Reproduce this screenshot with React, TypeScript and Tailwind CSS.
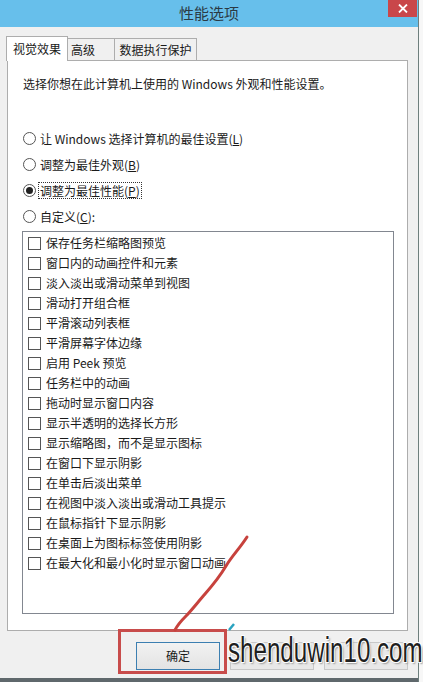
import React from 'react'

const font = { fontFamily: '"Noto Sans CJK SC", "Noto Sans", sans-serif' }

const effects = [
  '保存任务栏缩略图预览',
  '窗口内的动画控件和元素',
  '淡入淡出或滑动菜单到视图',
  '滑动打开组合框',
  '平滑滚动列表框',
  '平滑屏幕字体边缘',
  '启用 Peek 预览',
  '任务栏中的动画',
  '拖动时显示窗口内容',
  '显示半透明的选择长方形',
  '显示缩略图，而不是显示图标',
  '在窗口下显示阴影',
  '在单击后淡出菜单',
  '在视图中淡入淡出或滑动工具提示',
  '在鼠标指针下显示阴影',
  '在桌面上为图标标签使用阴影',
  '在最大化和最小化时显示窗口动画',
]

function Radio({ label, hotkey, checked, colon }: { label: string; hotkey: string; checked?: boolean; colon?: boolean }) {
  return (
    <div className="flex items-center h-[26px]">
      <span className="w-[13px] h-[13px] rounded-full border border-[#555] bg-white flex items-center justify-center">
        {checked && <span className="w-[7px] h-[7px] rounded-full bg-[#222]" />}
      </span>
      <span
        className={
          'ml-[2px] px-[1px] leading-[15px] text-[12px] text-[#1a1a1a] border ' +
          (checked ? 'border-dotted border-[#333]' : 'border-transparent')
        }
      >
        {label}(<span className="underline">{hotkey}</span>){colon ? ':' : ''}
      </span>
    </div>
  )
}

export default function App() {
  return (
    <div className="w-[423px] h-[682px] relative overflow-hidden bg-[#f7f7f7] flex" style={font}>
      <div className="w-[419px] h-full flex flex-col border-r border-[#6e7f7d]">
        {/* title bar */}
        <div className="h-[27px] bg-[#67bfeb] relative flex items-center justify-center">
          <span className="text-[15px] text-[#2b3a44]">性能选项</span>
          <div className="absolute right-[1px] top-0 w-[29px] h-[17px] bg-[#c9474a] flex items-center justify-center">
            <svg width="10" height="9" viewBox="0 0 10 9">
              <path d="M1 0.5 L9 8.5 M9 0.5 L1 8.5" stroke="#fff" strokeWidth="1.8" />
            </svg>
          </div>
        </div>

        {/* body */}
        <div className="flex-1 bg-[#f0f0f0] flex flex-col pl-[7px] pr-[10px] pt-[9px]">
          <div className="flex items-end h-[24px] text-[12px] text-[#1a1a1a]">
            <div className="h-[25px] w-[62px] bg-white border border-b-0 border-[#adadad] flex items-center justify-center relative z-10 -mb-[1px] -ml-[1px]">
              视觉效果
            </div>
            <div className="h-[22px] w-[47px] bg-[#f0f0f0] border border-b-0 border-l-0 border-[#adadad] flex items-center pl-[3px]">
              高级
            </div>
            <div className="h-[22px] w-[82px] bg-[#f0f0f0] border border-b-0 border-l-0 border-[#adadad] flex items-center justify-center">
              数据执行保护
            </div>
          </div>

          <div className="h-[571px] bg-white border border-[#adadad] flex flex-col pl-[14px] pr-[13px] pt-[15px]">
            <p className="text-[12px] leading-[16px] text-[#1a1a1a] ml-[1px]">
              选择你想在此计算机上使用的 Windows 外观和性能设置。
            </p>
            <div className="mt-[33px] flex flex-col ml-[1px]">
              <Radio label="让 Windows 选择计算机的最佳设置" hotkey="L" />
              <Radio label="调整为最佳外观" hotkey="B" />
              <Radio label="调整为最佳性能" hotkey="P" checked />
              <Radio label="自定义" hotkey="C" colon />
            </div>
            <div className="mt-[2px] h-[383px] border border-[#828790] pt-[1px] pl-[5px]">
              {effects.map((e) => (
                <div key={e} className="flex items-center h-[20px]">
                  <span className="w-[13px] h-[13px] border border-[#555] bg-white" />
                  <span className="ml-[5px] text-[12px] text-[#1a1a1a]">{e}</span>
                </div>
              ))}
            </div>
          </div>

          <div className="flex-1 flex items-start pt-[11px] pl-[129px] gap-[10px]">
            <button className="w-[86px] h-[28px] border border-[#3c7fb1] bg-gradient-to-b from-[#f2f2f2] to-[#e3e3e3] text-[12px] text-[#1a1a1a]">
              确定
            </button>
            <div className="w-[86px] h-[28px] border border-[#c8c8c8] bg-[#e8e8e8]" />
            <div className="w-[86px] h-[28px] border border-[#c8c8c8] bg-[#e8e8e8]" />
          </div>
        </div>
        <div className="h-[4px] bg-[#5f686c]" />
      </div>

      {/* annotations */}
      <div className="absolute left-[118px] top-[629px] w-[109px] h-[45px] border-[3px] border-[#c84c4b]" />
      <svg className="absolute left-0 top-0 pointer-events-none" width="423" height="682">
        <path
          d="M247 537 C 240 548, 232 556, 226 566 S 212 586, 205 594 S 190 612, 186 616 S 178 624, 175 630"
          stroke="#c7423d"
          strokeWidth="3"
          fill="none"
          strokeLinecap="round"
        />
        <path d="M229 630 L234 624" stroke="#2aa3c0" strokeWidth="2.5" />
      </svg>
      <div
        className="absolute left-[228px] top-[630px] text-[35px] leading-[40px] text-[#1f1f1f] origin-left scale-x-[0.69] whitespace-nowrap"
        style={{
          fontFamily: '"Liberation Sans", Arial, sans-serif',
          textShadow: '1px 1px 0 #fff, -1px -1px 0 #fff, 1px -1px 0 #fff, -1px 1px 0 #fff, 2px 2px 2px #999',
        }}
      >
        shenduwin10.com
      </div>
    </div>
  )
}
